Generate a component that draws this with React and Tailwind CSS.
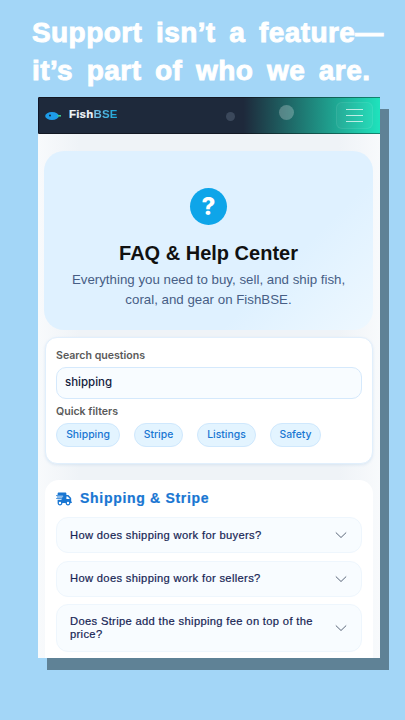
import React from "react";

function Truck() {
  return (
    <svg width="16" height="14" viewBox="0 0 640 512" fill="#1976d2" className="shrink-0">
      <path d="M112 0C85.5 0 64 21.5 64 48V96H16c-8.800 0-16 7.200-16 16s7.200 16 16 16H64 272c8.800 0 16 7.200 16 16s-7.200 16-16 16H64 48c-8.800 0-16 7.200-16 16s7.200 16 16 16H64 240c8.800 0 16 7.200 16 16s-7.200 16-16 16H64 16c-8.800 0-16 7.200-16 16s7.200 16 16 16H64 208c8.800 0 16 7.200 16 16s-7.200 16-16 16H64V416c0 53 43 96 96 96s96-43 96-96H384c0 53 43 96 96 96s96-43 96-96h32c17.700 0 32-14.300 32-32s-14.300-32-32-32V288 256 237.300c0-17-6.700-33.300-18.700-45.300L512 114.700c-12-12-28.300-18.700-45.300-18.700H416V48c0-26.500-21.500-48-48-48H112zM544 237.300V256H416V160h50.700L544 237.300zM160 368a48 48 0 1 1 0 96 48 48 0 1 1 0-96zm272 48a48 48 0 1 1 96 0 48 48 0 1 1-96 0z" />
    </svg>
  );
}

function Chevron() {
  return (
    <svg width="12" height="12" viewBox="0 0 12 12" fill="none" stroke="#475569" strokeWidth="0.900" className="shrink-0">
      <path d="M0.800 3.500 L6 8.500 L11.200 3.500" />
    </svg>
  );
}

function Faq({ children }) {
  return (
    <div className="flex min-h-[36px] items-center justify-between gap-4 rounded-xl border border-[#eef6fd] bg-[#f8fcff] py-[10px] pr-[14px] pl-[13px] text-[11.200px] leading-[13px] font-medium tracking-[0.33px] text-[#172554] [-webkit-text-stroke:0.2px_#172554]">
      <span className="block">{children}</span>
      <Chevron />
    </div>
  );
}

function Chip({ children, w }) {
  return (
    <span className={`flex h-6 items-center justify-center rounded-full border border-[#cfe8fd] bg-[#e3f4ff] font-['Inter',sans-serif] text-[10.400px] font-medium text-[#1976d2] ${w}`}>
      {children}
    </span>
  );
}

export default function App() {
  return (
    <div className="h-[720px] w-[405px] overflow-hidden bg-[#a3d6f7] font-['Liberation_Sans',sans-serif]">
      <h1 className="pt-[14px] pl-8 text-[28px] leading-[38px] font-bold tracking-[0.42px] [word-spacing:5.500px] whitespace-nowrap text-white [-webkit-text-stroke:0.9px_white]">
        Support isn’t a feature—<br />it’s part of who we are.
      </h1>
      <div className="mt-[7px] ml-[38px] h-[561px] w-[342px] overflow-hidden bg-[linear-gradient(90deg,#f8fafc,#eff3f7_12%,#eff3f7_88%,#f8fafc)] shadow-[9px_12px_0_#5f8296]">
        <header className="relative flex h-[37px] items-center justify-between overflow-hidden border-y border-l border-y-black/40 border-l-[#0f172a] bg-[linear-gradient(90deg,#1e293b_0%,#1e293b_60%,#1fe3bd_100%)] pr-[7px] pl-[6px]">
          <div className="flex items-center gap-[7px]">
            <svg width="17" height="10" viewBox="0 0 17 10">
              <ellipse cx="7" cy="5" rx="6.800" ry="4" fill="#1e9be8" />
              <rect x="12.500" y="4" width="3.500" height="1.600" fill="#3cc98a" />
              <circle cx="5" cy="4.500" r="0.900" fill="#0f172a" />
            </svg>
            <span className="-mt-0.5 text-[11.500px] font-bold tracking-[0.2px] text-[#f1f5f9] [-webkit-text-stroke:0.2px_currentColor]">
              Fish<span className="bg-[linear-gradient(90deg,#7fc4ea,#14a5d8)] bg-clip-text text-transparent [-webkit-text-stroke:0]">BSE</span>
            </span>
          </div>
          <span className="absolute top-[14px] left-[187px] size-[9px] rounded-full bg-[#475569]/70" />
          <span className="absolute top-[7px] left-[240px] size-[15px] rounded-full bg-white/25" />
          <button className="flex h-[27px] w-[37px] flex-col items-center justify-center gap-[5px] rounded-md border border-white/[0.07] bg-white/[0.03]">
            <span className="h-px w-[17px] bg-white/70" />
            <span className="h-px w-[17px] bg-white/70" />
            <span className="h-px w-[17px] bg-white/70" />
          </button>
        </header>

        <main className="flex flex-col px-[7px] pt-[17px]">
          <section className="-ml-px flex h-[179px] flex-col items-center rounded-[20px] bg-[linear-gradient(135deg,#dff1ff_0%,#dff1ff_70%,#eef8ff_100%)] pt-[37px] text-center">
            <span className="flex size-[37px] items-center justify-center rounded-full bg-[#0ea5e9] font-['Inter',sans-serif] text-[24px] leading-none font-extrabold text-white">
              ?
            </span>
            <h2 className="mt-[16px] text-[20px] leading-[24px] font-bold text-[#111]">FAQ &amp; Help Center</h2>
            <p className="mt-[5px] w-[300px] text-[13.300px] leading-5 text-[#475e85]">
              Everything you need to buy, sell, and ship fish, coral, and gear on FishBSE.
            </p>
          </section>

          <section className="mt-[7px] h-[127px] rounded-xl border border-[#e1effc] bg-white px-[10px] pt-[11px] shadow-[0_1px_3px_rgba(120,170,220,0.2)]">
            <label className="block font-['Inter',sans-serif] text-[10.600px] leading-[13px] font-semibold text-[#5a5a5a]">Search questions</label>
            <div className="mt-[5px] flex h-8 items-center rounded-[10px] border border-[#d5e9fc] bg-[#f8fcff] px-2 font-['Inter',sans-serif] text-[11.500px] font-medium text-[#14213d]">
              shipping
            </div>
            <div className="mt-[6px] font-['Inter',sans-serif] text-[10.600px] leading-[13px] font-semibold text-[#5a5a5a]">Quick filters</div>
            <div className="mt-[5px] flex gap-[14px]">
              <Chip w="w-[64px]">Shipping</Chip>
              <Chip w="w-[49px]">Stripe</Chip>
              <Chip w="w-[59px]">Listings</Chip>
              <Chip w="w-[51px]">Safety</Chip>
            </div>
          </section>

          <section className="mt-[16px] flex flex-col rounded-t-[14px] bg-white px-[11px] pt-[11px] pb-4">
            <div className="flex h-[15px] items-center gap-2">
              <Truck />
              <h3 className="text-[14px] font-bold tracking-[0.7px] text-[#1976d2] [-webkit-text-stroke:0.2px_#1976d2]">Shipping &amp; Stripe</h3>
            </div>
            <div className="mt-[11px] flex flex-col gap-[7.500px]">
              <Faq>How does shipping work for buyers?</Faq>
              <Faq>How does shipping work for sellers?</Faq>
              <Faq>Does Stripe add the shipping fee on top of the price?</Faq>
            </div>
          </section>
        </main>
      </div>
    </div>
  );
}
